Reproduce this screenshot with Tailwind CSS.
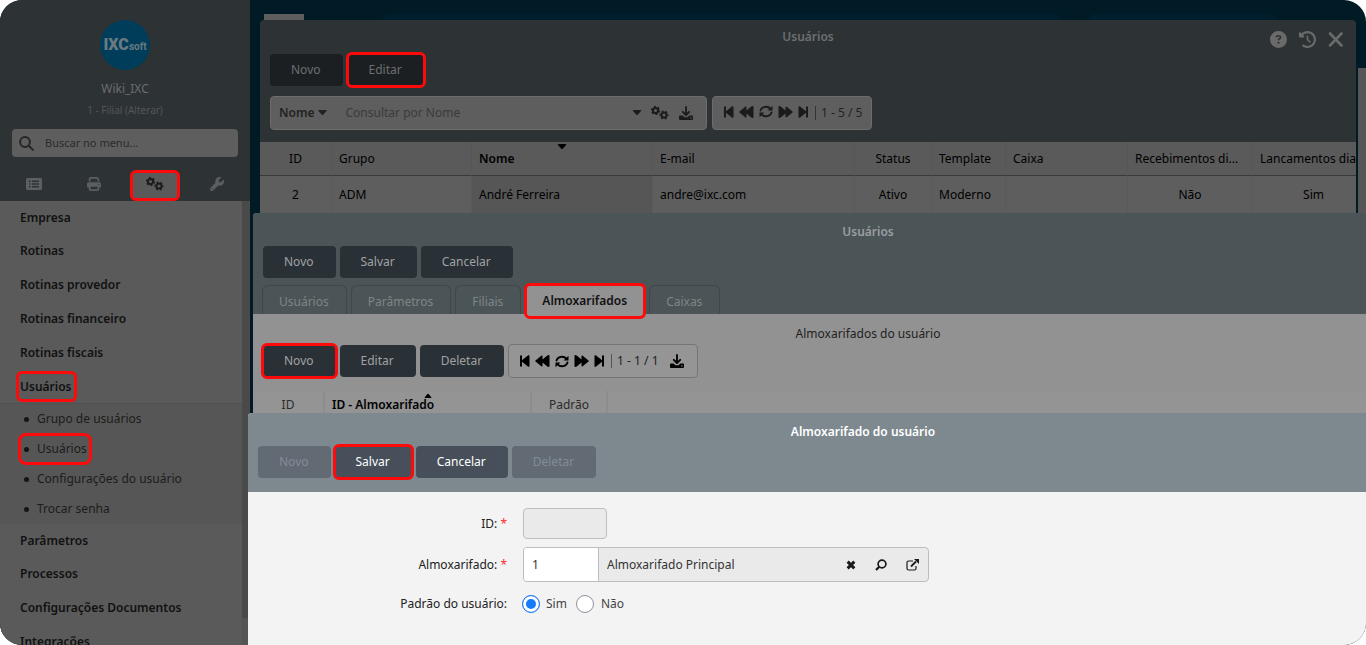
<!DOCTYPE html>
<html lang="pt-BR">
<head>
<meta charset="utf-8">
<title>Almoxarifado do usuário</title>
<script src="https://cdn.jsdelivr.net/npm/@tailwindcss/browser@4"></script>
</head>
<body class="bg-white font-['Noto_Sans',sans-serif] text-xs leading-4">
<svg class="hidden">
  <symbol id="gears" viewBox="0 0 18 14"><g fill="none" stroke="currentColor"><circle cx="4.5" cy="4.5" r="2.6" stroke-width="2"/><circle cx="4.5" cy="4.5" r="3.9" stroke-width="1.4" stroke-dasharray="2.04 2.04"/><circle cx="13" cy="9" r="2.6" stroke-width="2"/><circle cx="13" cy="9" r="3.9" stroke-width="1.4" stroke-dasharray="2.04 2.04" stroke-dashoffset="1"/></g></symbol>
  <symbol id="download" viewBox="0 0 14 14"><path d="M7 1v7.5M3.8 5.8 7 9l3.2-3.2" fill="none" stroke="currentColor" stroke-width="1.8" stroke-linecap="round" stroke-linejoin="round"/><path fill="currentColor" fill-rule="evenodd" d="M1 9.500h2.600L5.500 11.200h3L10.400 9.500H13q1 0 1 1v2.500q0 1-1 1H1q-1 0-1-1v-2.500q0-1 1-1zM11.300 11.200v1.200h1.200v-1.200z"/></symbol>
  <symbol id="first" viewBox="0 0 10 12"><path fill="currentColor" d="M0 .5h2v4.700L8.200.3Q9.500-.2 9.500 1v10q0 1.200-1.300.7L2 6.800v4.700H0z"/></symbol>
  <symbol id="last" viewBox="0 0 10 12"><path fill="currentColor" d="M10 .5H8v4.700L1.800.3Q.5-.2.5 1v10q0 1.200 1.300.7L8 6.800v4.700h2z"/></symbol>
  <symbol id="rewind" viewBox="0 0 15 12"><path fill="currentColor" d="M7.500 1.200v3.300l4.800-4Q14.500-.5 14.500 1v10q0 1.500-2.200.5l-4.800-4v3.300q0 1.200-1.200.5L.5 6.600q-.6-.6 0-1.200L6.300.7q1.200-.7 1.200.5z"/></symbol>
  <symbol id="forward" viewBox="0 0 15 12"><path fill="currentColor" d="M7.500 1.200v3.300l-4.800-4Q.5-.5.500 1v10q0 1.500 2.200.5l4.800-4v3.300q0 1.200 1.200.5l5.800-4.700q.6-.6 0-1.200L8.700.7Q7.500 0 7.500 1.200z"/></symbol>
  <symbol id="sync" viewBox="0 0 14 13"><path d="M1.500 5.500C2.600 1.600 8.400.2 11.300 3.700M12.500 7.500C11.400 11.400 5.600 12.800 2.700 9.300" fill="none" stroke="currentColor" stroke-width="1.900" stroke-linecap="round"/><path fill="currentColor" d="M13.500.8v4.700H8.600zM.5 12.200V7.500h4.900z"/></symbol>
  <symbol id="caret" viewBox="0 0 9 6"><path fill="currentColor" d="M1 0h7q1.300 0 .5 1L5.200 4.700q-.7.600-1.400 0L.5 1Q-.3 0 1 0z"/></symbol>
</svg>

<div class="relative flex h-screen overflow-hidden rounded-[22px] bg-[#001a26]">

  <aside class="flex w-[250px] shrink-0 flex-col bg-[#2d3235]">
    <div class="flex h-[201px] shrink-0 flex-col">
      <div class="flex flex-col items-center pt-5">
        <div class="flex size-[50px] items-center justify-center rounded-full bg-[#003d5b] font-[Roboto,sans-serif] text-[#6b7a80]"><span class="text-base font-black">IXC</span><span class="pt-1 text-[10px] font-bold">soft</span></div>
        <p class="mt-[11px] text-[#6b6d6f]">Wiki_IXC</p>
        <a href="#" class="mt-[5px] text-[10px] text-[#535658]">1 - Filial (Alterar)</a>
      </div>
      <label class="mx-3 mt-[11px] flex h-7 shrink-0 items-center rounded bg-[#5e5e5e] pl-[7px]">
        <svg class="size-[15px] text-[#242627]" viewBox="0 0 15 15" fill="none" stroke="currentColor" stroke-width="2" stroke-linecap="round"><circle cx="6" cy="6" r="4.900"/><path d="m9.700 9.700 4.200 4.200"/></svg>
        <input aria-label="Buscar no menu" placeholder="Buscar no menu..." class="ml-[11px] min-w-0 flex-1 bg-transparent text-[11px] outline-none placeholder:text-[#2b2b2b]">
      </label>
      <nav class="mt-auto flex h-[31px] items-stretch text-[#5c5f60]">
        <button aria-label="Lista" class="ml-2 flex w-[52px] items-center justify-center pb-1"><svg class="h-3 w-4" viewBox="0 0 16 12"><path fill="currentColor" fill-rule="evenodd" d="M1.500 0h13Q16 0 16 1.500v9q0 1.500-1.500 1.500h-13Q0 12 0 10.500v-9Q0 0 1.500 0zM3 2.500V4h1.500V2.500zm3 0V4h7V2.500zM3 5.200v1.500h1.500V5.200zm3 0v1.500h7V5.200zM3 8v1.500h1.500V8zm3 0v1.500h7V8z"/></svg></button>
        <button aria-label="Impressão" class="ml-2 flex w-[52px] items-center justify-center pb-1"><svg class="size-[14px]" viewBox="0 0 512 512"><path fill="currentColor" d="M128 0C92.700 0 64 28.700 64 64v96h64V64H354.700L384 93.300V160h64V93.300c0-17-6.700-33.300-18.700-45.300L400 18.700C388 6.700 371.700 0 354.700 0H128zM384 352v96H128V352H384zm64 32h32c17.700 0 32-14.300 32-32V256c0-35.300-28.700-64-64-64H64c-35.300 0-64 28.700-64 64v96c0 17.700 14.300 32 32 32H64v64c0 35.300 28.700 64 64 64H384c35.300 0 64-28.700 64-64V384zM432 248a24 24 0 1 1 0 48 24 24 0 1 1 0-48z"/></svg></button>
        <button aria-label="Configurações" class="ml-[10px] flex w-[50px] items-center justify-center rounded-md border-3 border-[#ff0a0a] bg-[#5a5a5a] pb-1 text-[#1c1c1c]"><svg class="h-[14px] w-[18px]"><use href="#gears"/></svg></button>
        <button aria-label="Ferramentas" class="ml-3 flex w-[50px] items-center justify-center pb-1"><svg class="size-[14px]" viewBox="0 0 512 512"><path fill="currentColor" d="M352 320c88.400 0 160-71.600 160-160c0-15.300-2.200-30.100-6.200-44.200c-3.100-10.800-16.400-13.200-24.300-5.300l-76.800 76.800c-3 3-7.100 4.700-11.300 4.700H336c-8.800 0-16-7.200-16-16V118.600c0-4.200 1.700-8.300 4.700-11.300l76.800-76.800c7.900-7.900 5.400-21.200-5.300-24.300C382.100 2.200 367.300 0 352 0C263.600 0 192 71.600 192 160c0 19.100 3.400 37.500 9.500 54.500L19.900 396.100C7.200 408.800 0 426.100 0 444.100C0 481.600 30.400 512 67.900 512c18 0 35.300-7.200 48-19.900L297.500 310.500c17 6.200 35.400 9.500 54.500 9.500zM80 408a24 24 0 1 1 0 48 24 24 0 1 1 0-48z"/></svg></button>
      </nav>
    </div>
    <div class="flex min-h-0 flex-1 overflow-hidden bg-[#5a5a5a]">
      <nav class="flex-1 font-semibold text-[#111]">
        <a href="#" class="flex h-[33px] items-center pl-5">Empresa</a>
        <a href="#" class="flex h-[34px] items-center pl-5">Rotinas</a>
        <a href="#" class="flex h-[34px] items-center pl-5">Rotinas provedor</a>
        <a href="#" class="flex h-[34px] items-center pl-5">Rotinas financeiro</a>
        <a href="#" class="flex h-[34px] items-center pl-5">Rotinas fiscais</a>
        <a href="#" class="flex h-[33px] items-center pl-4"><span class="flex h-[31px] items-center rounded-md pr-[6px] pl-1 outline-3 -outline-offset-3 outline-[#ff0a0a]">Usuários</span></a>
        <div class="border-t border-[#515151] bg-[#565656] font-normal text-[#1c1c1c]">
          <a href="#" class="flex h-[30px] items-center gap-2 pl-6"><i class="size-[5px] rounded-full bg-[#151515]"></i>Grupo de usuários</a>
          <a href="#" class="flex h-[30px] items-center pl-5"><span class="flex h-[28px] items-center gap-2 rounded-md pr-[3px] pl-1 outline-3 -outline-offset-1 outline-[#ff0a0a]"><i class="size-[5px] rounded-full bg-[#151515]"></i>Usuários</span></a>
          <a href="#" class="flex h-[30px] items-center gap-2 pl-6"><i class="size-[5px] rounded-full bg-[#151515]"></i>Configurações do usuário</a>
          <a href="#" class="flex h-[30px] items-center gap-2 pl-6"><i class="size-[5px] rounded-full bg-[#151515]"></i>Trocar senha</a>
        </div>
        <a href="#" class="flex h-[33px] items-center pl-5">Parâmetros</a>
        <a href="#" class="flex h-[34px] items-center pl-5">Processos</a>
        <a href="#" class="flex h-[34px] items-center pl-5">Configurações Documentos</a>
        <a href="#" class="flex h-[34px] items-center pl-5">Integrações</a>
      </nav>
      <div class="w-2 bg-[#555]"><div class="h-[94%] bg-[#4a4a4a]"></div></div>
    </div>
  </aside>

  <main class="relative min-w-0 flex-1">
    <div class="flex h-5 items-end">
      <i class="ml-[14px] h-[6px] w-10 bg-[#5e5e5e]"></i>
      <i class="ml-[79px] h-[6px] w-[136px] rounded-tl-2xl border-r border-[#001a26] bg-[#001f2e]"></i>
      <i class="h-[6px] w-[542px] rounded-tr-2xl bg-[#001f2e]"></i>
      <i class="ml-7 h-[6px] w-[187px] rounded-t-2xl bg-[#001f2e]"></i>
    </div>
    <div class="absolute top-[68px] right-0 h-[145px] w-2 bg-[#565656]"></div>

    <!-- Lista de usuários -->
    <section class="absolute top-5 right-[10px] bottom-0 left-[10px] overflow-hidden rounded-t bg-[#2d3235]">
      <div class="relative flex h-[34px] items-center justify-center">
        <h2 class="font-semibold text-[#6c6f71]">Usuários</h2>
        <div class="absolute top-[11px] right-3 flex items-center gap-3 text-[#6a6a6a]">
          <button aria-label="Ajuda"><svg class="size-[17px]" viewBox="0 0 512 512"><path fill="currentColor" d="M256 512A256 256 0 1 0 256 0a256 256 0 1 0 0 512zM169.800 165.300c7.900-22.300 29.100-37.300 52.800-37.300h58.300c34.900 0 63.100 28.300 63.100 63.100c0 22.600-12.100 43.500-31.700 54.800L280 264.400c-.2 13-10.900 23.600-24 23.600c-13.300 0-24-10.700-24-24V250.500c0-8.600 4.600-16.500 12.100-20.800l44.300-25.400c4.700-2.700 7.600-7.700 7.600-13.100c0-8.400-6.800-15.100-15.100-15.100H222.600c-3.400 0-6.400 2.100-7.500 5.300l-.4 1.200c-4.400 12.500-18.200 19-30.600 14.600s-19-18.200-14.600-30.600l.4-1.200zM224 352a32 32 0 1 1 64 0 32 32 0 1 1 -64 0z"/></svg></button>
          <button aria-label="Histórico"><svg class="size-[17px]" viewBox="0 0 512 512"><path fill="currentColor" d="M75 75L41 41C25.900 25.900 0 36.600 0 57.900V168c0 13.300 10.700 24 24 24H134.100c21.400 0 32.100-25.900 17-41l-30.800-30.800C155 85.500 203 64 256 64c106 0 192 86 192 192s-86 192-192 192c-40.800 0-78.600-12.700-109.700-34.400c-14.500-10.100-34.400-6.600-44.600 7.900s-6.600 34.400 7.900 44.600C151.200 495 201.700 512 256 512c141.400 0 256-114.600 256-256S397.400 0 256 0C185.300 0 121.300 28.700 75 75zm181 53c-13.300 0-24 10.700-24 24V256c0 6.400 2.500 12.500 7 17l72 72c9.400 9.400 24.600 9.400 33.900 0s9.400-24.600 0-33.900l-65-65V152c0-13.300-10.700-24-24-24z"/></svg></button>
          <button aria-label="Fechar"><svg class="size-[16px]" viewBox="0 0 16 16"><path d="m2 1.500 11.500 12M13.500 1.500 2 13.500" stroke="currentColor" stroke-width="2.600" stroke-linecap="round"/></svg></button>
        </div>
      </div>
      <div class="flex gap-[5px] px-[10px] text-[#6c6f71]">
        <button class="h-8 rounded bg-[#1b1f22] pr-[22px] pl-[21px]">Novo</button>
        <button class="h-8 rounded bg-[#1b1f22] pr-[22px] pl-[21px] outline-3 -outline-offset-1 outline-[#ff0a0a]">Editar</button>
      </div>
      <div class="mt-[10px] flex gap-[5px] px-[10px] text-[#1b1b1b]">
        <div class="flex h-[34px] w-[437px] items-center rounded border border-[#6c6c6c] bg-[#5e5e5e] pr-[13px] pl-2">
          <button class="flex items-center gap-1 font-semibold text-[#222]">Nome <svg class="h-[6px] w-[9px]"><use href="#caret"/></svg></button>
          <input aria-label="Consultar por Nome" placeholder="Consultar por Nome" class="ml-[18px] min-w-0 flex-1 bg-transparent outline-none placeholder:text-[#3b3b3b]">
          <button aria-label="Opções"><svg class="h-[6px] w-[10px]"><use href="#caret"/></svg></button>
          <button aria-label="Configurar" class="ml-[9px]"><svg class="h-[14px] w-[18px]"><use href="#gears"/></svg></button>
          <button aria-label="Exportar" class="ml-[10px]"><svg class="size-[14px]"><use href="#download"/></svg></button>
        </div>
        <div class="flex h-[34px] items-center rounded border border-[#6c6c6c] bg-[#5e5e5e] pr-[9px] pl-[11px]">
          <div class="flex items-center gap-[5px] pb-[3px]">
            <button aria-label="Primeira"><svg class="h-3 w-[10px]"><use href="#first"/></svg></button>
            <button aria-label="Anterior"><svg class="h-3 w-[15px]"><use href="#rewind"/></svg></button>
            <button aria-label="Atualizar"><svg class="h-[13px] w-[14px]"><use href="#sync"/></svg></button>
            <button aria-label="Próxima"><svg class="h-3 w-[15px]"><use href="#forward"/></svg></button>
            <button aria-label="Última"><svg class="h-3 w-[10px]"><use href="#last"/></svg></button>
          </div>
          <span class="ml-[7px] h-[14px] w-px bg-[#333]"></span><span class="ml-[5px] text-[#222]">1 - 5 / 5</span>
        </div>
      </div>
      <table class="mt-3 w-[1115px] table-fixed border-separate border-spacing-0 bg-[#5e5e5e] text-left text-black">
        <colgroup><col class="w-[72px]"><col class="w-[140px]"><col class="w-[181px]"><col class="w-[202px]"><col class="w-[77px]"><col class="w-[74px]"><col class="w-[122px]"><col class="w-[125px]"><col class="w-[122px]"></colgroup>
        <thead><tr class="h-[34px] *:border-r *:border-b *:border-r-[#565656] *:border-b-[#3a3a3a] *:bg-[#5a5a5a] *:px-[7px] *:font-normal *:whitespace-nowrap">
          <th class="text-center">ID</th><th>Grupo</th>
          <th class="relative"><span class="font-semibold">Nome</span><svg class="absolute top-[2px] left-1/2 h-[6px] w-[9px] -translate-x-1/2"><use href="#caret"/></svg></th>
          <th>E-mail</th><th class="text-center">Status</th><th>Template</th><th>Caixa</th><th>Recebimentos di...</th><th>Lancamentos dia...</th>
        </tr></thead>
        <tbody><tr class="h-[37px] *:border-r *:border-r-[#5a5a5a] *:px-[7px]">
          <td class="text-center">2</td><td>ADM</td><td class="bg-[#565656]">André Ferreira</td><td>andre@ixc.com</td><td class="text-center">Ativo</td><td>Moderno</td><td></td><td class="text-center">Não</td><td class="text-center">Sim</td>
        </tr></tbody>
      </table>
    </section>

    <!-- Cadastro do usuário -->
    <section class="absolute top-[213px] -right-[117px] bottom-0 left-[3px] rounded-tl bg-[#929292]">
      <div class="rounded-tl bg-[#4b5457]">
        <h2 class="pt-[11px] pb-[6px] text-center font-semibold text-[#9a9fa1]">Usuários</h2>
        <div class="flex gap-1 px-[10px] text-[#a0a2a3]">
          <button class="h-8 rounded bg-[#2a3136] pr-[22px] pl-[21px]">Novo</button>
          <button class="h-8 rounded bg-[#2a3136] pr-[22px] pl-[21px]">Salvar</button>
          <button class="h-8 rounded bg-[#2a3136] pr-[22px] pl-[21px]">Cancelar</button>
        </div>
        <div class="mt-[7px] flex gap-1 px-[9px] text-[#7f8587]">
          <button class="h-[29px] rounded-t-md border border-b-0 border-[#3f474a] pt-[3px] pr-[17px] pl-4">Usuários</button>
          <button class="h-[29px] rounded-t-md border border-b-0 border-[#3f474a] pt-[3px] pr-[17px] pl-4">Parâmetros</button>
          <button class="h-[29px] rounded-t-md border border-b-0 border-[#3f474a] pt-[3px] pr-[17px] pl-4">Filiais</button>
          <button class="relative h-[29px] rounded-t-md bg-[#929292] pt-[3px] pr-[18px] pl-[17px] font-semibold text-[#111]">Almoxarifados<i class="absolute -inset-x-px -top-[2px] -bottom-[5px] rounded-md border-3 border-[#ff0a0a]"></i></button>
          <button class="h-[29px] rounded-t-md border border-b-0 border-[#3f474a] pt-[3px] pr-[17px] pl-4">Caixas</button>
        </div>
      </div>
      <h3 class="pt-3 pb-[2px] text-center text-[#1f1f1f]">Almoxarifados do usuário</h3>
      <div class="flex items-center gap-1 px-[10px] text-[#a0a2a3]">
        <button class="h-8 rounded bg-[#2a3136] pr-[22px] pl-[21px] outline-3 -outline-offset-1 outline-[#ff0a0a]">Novo</button>
        <button class="h-8 rounded bg-[#2a3136] pr-[22px] pl-[21px]">Editar</button>
        <button class="h-8 rounded bg-[#2a3136] pr-[22px] pl-[21px]">Deletar</button>
        <div class="flex h-[34px] items-center rounded border border-[#757575] bg-[#959595] pr-[13px] pl-[11px] text-black">
          <div class="flex items-center gap-[5px]">
            <button aria-label="Primeira"><svg class="h-3 w-[10px]"><use href="#first"/></svg></button>
            <button aria-label="Anterior"><svg class="h-3 w-[15px]"><use href="#rewind"/></svg></button>
            <button aria-label="Atualizar"><svg class="h-[13px] w-[14px]"><use href="#sync"/></svg></button>
            <button aria-label="Próxima"><svg class="h-3 w-[15px]"><use href="#forward"/></svg></button>
            <button aria-label="Última"><svg class="h-3 w-[10px]"><use href="#last"/></svg></button>
          </div>
          <span class="ml-[7px] h-[14px] w-px bg-[#555]"></span><span class="ml-[5px] text-[#222]">1 - 1 / 1</span>
          <button aria-label="Exportar" class="ml-[11px]"><svg class="size-[14px]"><use href="#download"/></svg></button>
        </div>
      </div>
      <table class="mt-[13px] w-full table-fixed border-separate border-spacing-0 bg-[#949494] text-[#2b2b2b]">
        <colgroup><col class="w-[72px]"><col class="w-[207px]"><col class="w-[76px]"><col></colgroup>
        <thead><tr class="h-7 *:border-r-2 *:border-[#8d8d8d] *:font-normal">
          <th>ID</th><th class="relative pl-[7px] text-left text-black"><span class="font-semibold">ID - Almoxarifado</span><svg class="absolute top-[2px] left-1/2 h-[5px] w-2 -translate-x-1/2 rotate-180" viewBox="0 0 9 6"><use href="#caret"/></svg></th><th>Padrão</th><th></th>
        </tr></thead>
      </table>
    </section>

    <!-- Almoxarifado do usuário -->
    <section class="absolute top-[413px] -right-28 bottom-0 -left-[2px] rounded-tl bg-[#f3f3f3]">
      <div class="rounded-tl bg-[#7d898e] pb-[14px]">
        <h2 class="pt-[11px] pb-[6px] text-center font-semibold text-white">Almoxarifado do usuário</h2>
        <div class="flex gap-1 px-[10px] text-white">
          <button disabled class="h-8 rounded bg-[#626a74] pr-[22px] pl-[21px] text-[#848c97]">Novo</button>
          <button class="h-8 rounded bg-[#47505a] pr-[22px] pl-[21px] outline-3 -outline-offset-1 outline-[#ff0a0a]">Salvar</button>
          <button class="h-8 rounded bg-[#47505a] pr-[22px] pl-[21px]">Cancelar</button>
          <button disabled class="h-8 rounded bg-[#626a74] pr-[22px] pl-[21px] text-[#848c97]">Deletar</button>
        </div>
      </div>
      <form class="grid grid-cols-[259px_1fr] items-center gap-x-4 gap-y-2 pt-4 text-[#222]">
        <label for="id" class="text-right">ID: <span class="text-red-500">*</span></label>
        <input id="id" disabled class="h-[31px] w-[84px] rounded border border-[#babfc4] bg-[#eaeaea]">
        <label for="almox" class="text-right">Almoxarifado: <span class="text-red-500">*</span></label>
        <div class="flex h-[35px] w-[406px] items-center overflow-hidden rounded border border-[#bbbdc0] bg-[#eaeaea]">
          <input id="almox" value="1" class="h-full w-[75px] border-r border-[#bbbdc0] bg-white px-2 text-[#333] outline-none">
          <input aria-label="Nome do almoxarifado" readonly value="Almoxarifado Principal" class="min-w-0 flex-1 bg-transparent px-2 text-[#333] outline-none">
          <div class="flex items-center gap-[19px] pr-[9px] text-[#1a1a1a]">
            <button type="button" aria-label="Limpar"><svg class="size-[10px]" viewBox="0 0 9 9"><path d="m1.500 1.500 6 6M7.500 1.500l-6 6" stroke="currentColor" stroke-width="2.700"/></svg></button>
            <button type="button" aria-label="Buscar"><svg class="size-3" viewBox="0 0 12 12" fill="none" stroke="currentColor"><circle cx="7" cy="5" r="3.900" stroke-width="1.700"/><path d="M4.300 7.700 1 11" stroke-width="2.200"/></svg></button>
            <button type="button" aria-label="Abrir"><svg class="h-3 w-[13px]" viewBox="0 0 13 12"><path d="M7 2H2.500Q1 2 1 3.500v6Q1 11 2.500 11h6q1.500 0 1.500-1.500V7" fill="none" stroke="currentColor" stroke-width="1.200"/><path d="m5 7.500 5-5" stroke="currentColor" stroke-width="1.800"/><path d="M8 0h5v5z" fill="currentColor"/></svg></button>
          </div>
        </div>
        <span class="text-right">Padrão do usuário:</span>
        <div class="flex h-7 items-center text-[#444]">
          <input type="radio" id="sim" name="padrao" checked class="-ml-px size-[18px] appearance-none rounded-full border border-[#8d929b] bg-white checked:border-[#1a7af8] checked:bg-[#147cf8] checked:shadow-[inset_0_0_0_3px_#fff]">
          <label for="sim" class="ml-[6px]">Sim</label>
          <input type="radio" id="nao" name="padrao" class="ml-[9px] size-[18px] appearance-none rounded-full border border-[#8d929b] bg-white checked:border-[#1a7af8] checked:bg-[#147cf8] checked:shadow-[inset_0_0_0_3px_#fff]">
          <label for="nao" class="ml-[7px]">Não</label>
        </div>
      </form>
    </section>
  </main>
</div>
</body>
</html>
